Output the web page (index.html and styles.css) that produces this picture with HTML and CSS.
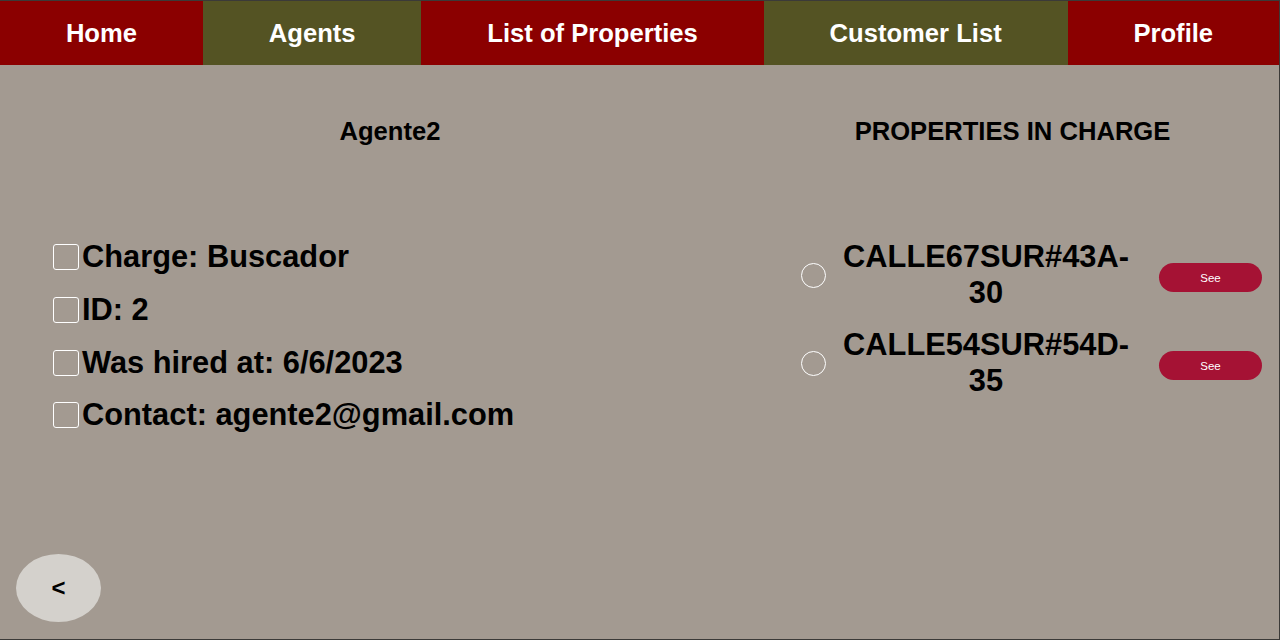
FILE: index.html
```html
<!DOCTYPE html>
<html>
<head>
<meta charset="utf-8">
<link rel="stylesheet" href="styles.css">
</head>
<body>
<div class="frame">
  <nav class="nav">
    <a class="nav-item red">Home</a>
    <a class="nav-item olive">Agents</a>
    <a class="nav-item red">List of Properties</a>
    <a class="nav-item olive">Customer List</a>
    <a class="nav-item red">Profile</a>
  </nav>
  <main class="main">
    <section class="col-left">
      <h2 class="heading">Agente2</h2>
      <ul class="info-list">
        <li class="info-row"><span class="check"></span>Charge: Buscador</li>
        <li class="info-row"><span class="check"></span>ID: 2</li>
        <li class="info-row"><span class="check"></span>Was hired at: 6/6/2023</li>
        <li class="info-row"><span class="check"></span>Contact: agente2@gmail.com</li>
      </ul>
    </section>
    <section class="col-right">
      <h2 class="heading heading-right">PROPERTIES IN CHARGE</h2>
      <ul class="prop-list">
        <li class="prop-row"><span class="radio"></span><span class="prop-name">CALLE67SUR#43A-30</span><button class="see-btn">See</button></li>
        <li class="prop-row"><span class="radio"></span><span class="prop-name">CALLE54SUR#54D-35</span><button class="see-btn">See</button></li>
      </ul>
    </section>
    <div class="footer">
      <button class="back-btn">&lt;</button>
    </div>
  </main>
</div>
</body>
</html>
```
FILE: styles.css
```css
* { box-sizing: border-box; }
html, body { margin: 0; padding: 0; }
body {
  font-family: "Liberation Sans", Arial, sans-serif;
  background: #a39a91;
  color: #000;
}
.frame {
  height: 640px;
  border-top: 1px solid #3b3a38;
  border-right: 1px solid #3b3a38;
  border-bottom: 1px solid #3b3a38;
  display: flex;
  flex-direction: column;
  overflow: hidden;
}
.nav {
  display: flex;
  height: 64px;
  flex: none;
}
.nav-item {
  flex: 1 1 auto;
  display: flex;
  align-items: center;
  justify-content: center;
  color: #fff;
  font-weight: bold;
  font-size: 25.6px;
  white-space: nowrap;
}
.red { background: #8b0000; }
.olive { background: #545323; }

.main {
  flex: 1;
  display: grid;
  grid-template-columns: 780px 1fr;
  grid-template-rows: 1fr auto;
}
.col-left, .col-right {
  padding-top: 52px;
}
.heading {
  margin: 0;
  font-size: 25.6px;
  line-height: 28px;
  font-weight: bold;
  text-align: center;
}
.heading-right {
  padding-right: 34px;
}
.info-list {
  list-style: none;
  margin: 86px 0 0 0;
  padding: 0 0 0 53px;
}
.info-row {
  display: flex;
  align-items: center;
  font-size: 30.8px;
  font-weight: bold;
  height: 52.7px;
}
.check {
  width: 26px;
  height: 26px;
  border: 1.5px solid #fff;
  border-radius: 3px;
  margin-right: 3px;
  flex: none;
}
.prop-list {
  list-style: none;
  margin: 94px 0 0 0;
  padding: 0 17px 0 21px;
}
.prop-row {
  display: flex;
  align-items: center;
  margin-bottom: 16px;
}
.radio {
  width: 25px;
  height: 25px;
  border: 1.5px solid #fff;
  border-radius: 50%;
  flex: none;
}
.prop-name {
  width: 302px;
  margin-left: 9px;
  font-size: 30.8px;
  line-height: 36px;
  font-weight: bold;
  text-align: center;
  flex: none;
}
.see-btn {
  margin-left: auto;
  width: 103px;
  height: 29px;
  border: none;
  border-radius: 15px;
  background: #a51234;
  color: #fff;
  font-family: "Liberation Sans", Arial, sans-serif;
  font-size: 11.5px;
  padding: 0;
  margin-top: 5px;
}
.footer {
  grid-column: 1 / 3;
  padding: 0 0 17px 16px;
}
.back-btn {
  width: 85px;
  height: 68px;
  border: none;
  border-radius: 50%;
  background: #d4d1cc;
  color: #000;
  font-family: "Liberation Sans", Arial, sans-serif;
  font-size: 24px;
  font-weight: bold;
  padding: 0;
}
```
